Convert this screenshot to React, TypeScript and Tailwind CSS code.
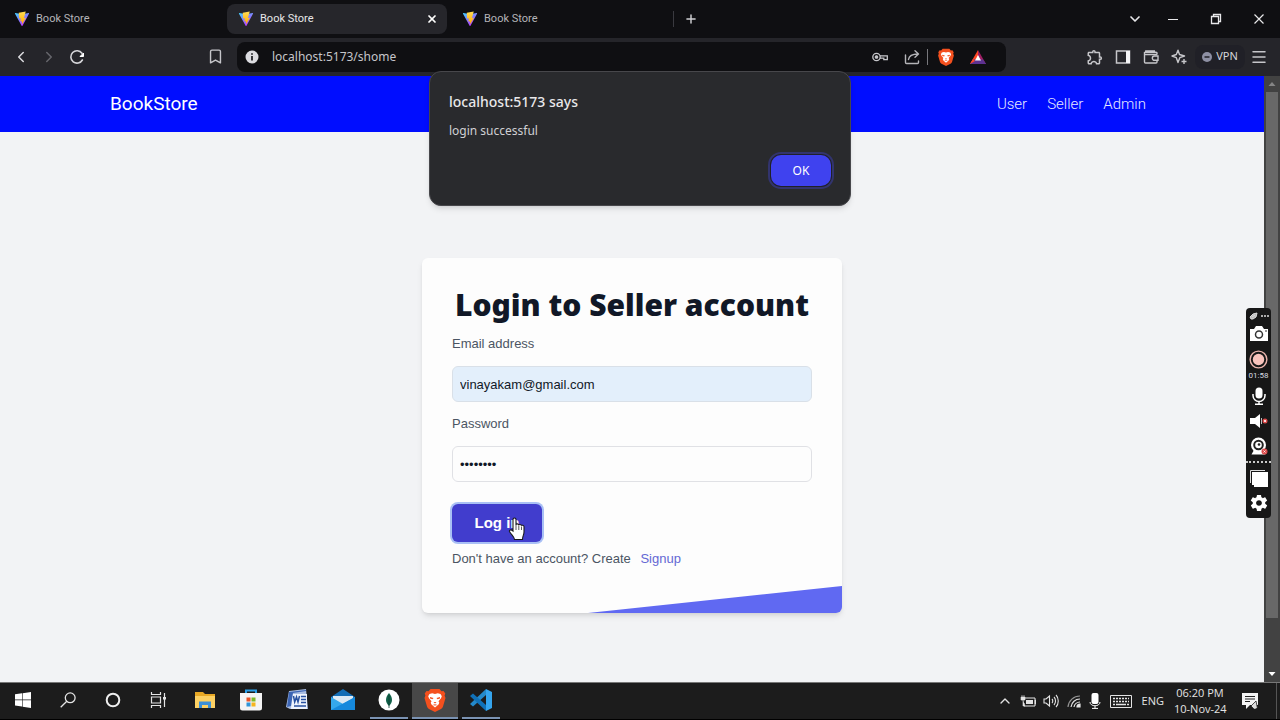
import type { ReactNode } from 'react';
import { ChevronLeft, ChevronRight, ChevronDown, ChevronUp, Plus, X, Menu, Bookmark } from 'lucide-react';
import { MdOutlineExtension } from 'react-icons/md';
import { IoMdSettings } from 'react-icons/io';

function ViteLogo() {
  return (
    <svg viewBox="0 0 32 32" className="size-4 shrink-0" aria-hidden="true">
      <defs>
        <linearGradient id="shell" x1="0" y1="0" x2="0.6" y2="1">
          <stop offset="0" stopColor="#41d1ff" />
          <stop offset="1" stopColor="#bd34fe" />
        </linearGradient>
        <linearGradient id="bolt" x1="0" y1="0" x2="0" y2="1">
          <stop offset="0" stopColor="#ffdd55" />
          <stop offset="1" stopColor="#ffa800" />
        </linearGradient>
      </defs>
      <path d="M30 5.500 17 29.500c-.4.700-1.400.700-1.800 0L2 5.500c-.4-.8.200-1.600 1-1.500L16 6.300 29 4c.9-.1 1.500.700 1 1.500Z" fill="url(#shell)" />
      <path d="m23.500 1-14 2.500.7 11.500 3.300-.3-.5 6.500 3-.8v6l8-13-4.100.8Z" fill="url(#bolt)" />
    </svg>
  );
}

function Tab({ active = false }: { active?: boolean }) {
  return (
    <div className={active ? 'flex h-[30px] w-[220px] items-center rounded-lg bg-[#26262b] pr-[9px] pl-[11px]' : 'flex h-[30px] w-[220px] items-center pr-2 pl-[11px]'}>
      <button type="button" className="flex flex-1 items-center gap-1.5 text-left font-[Roboto,sans-serif]">
        <ViteLogo />
        <span className={active ? 'text-[11px] text-[#e6e6e8]' : 'text-[11px] text-[#b4b4b8]'}>Book Store</span>
      </button>
      {active && (
        <button type="button" aria-label="Close tab">
          <X className="size-3 text-white" strokeWidth={3.5} />
        </button>
      )}
    </div>
  );
}

function BraveIcon({ className }: { className: string }) {
  return (
    <svg viewBox="0 0 24 24" className={className} aria-hidden="true">
      <path d="M7.500 1h9l2 2.300 2-.3 1.800 2.500-.7 2 .9 2.500-2.500 8.500a5 5 0 0 1-2 2.500L12 24l-6-3a5 5 0 0 1-2-2.500L1.500 10l.9-2.500-.7-2L3.500 3l2 .3Z" fill="#f4501e" />
      <path d="m12 6 2.800-.8 2.700.8 1.300 2.200-.8 2-2.500 3 .8 1.500-.8 1.800-3.500 3-3.500-3-.8-1.800.8-1.500-2.500-3-.8-2L6.500 6l2.700-.8Z" fill="#fff" />
      <path d="m7 9 3.500 1-1 1.300L7 10.500Zm10 0-3.500 1 1 1.300 2.500-.8ZM10.500 14h3L12 15.500ZM9.500 17l2.500-.8 2.500.8-2.500.4Z" fill="#f4501e" />
    </svg>
  );
}

function ToolButton({ label, children }: { label: string; children: ReactNode }) {
  return (
    <button type="button" aria-label={label} className="flex h-7 w-7 shrink-0 items-center justify-center text-[#c6c6ca]">
      {children}
    </button>
  );
}

function TabStrip() {
  return (
    <header className="flex h-[38px] shrink-0 items-center justify-between bg-[#0f0f12]">
      <nav aria-label="Tabs" className="flex items-center gap-1 pl-[3px]">
        <Tab />
        <Tab active />
        <Tab />
        <span className="-ml-0.5 h-4 w-px bg-[#3a3a40]" />
        <button type="button" aria-label="New tab" className="ml-1.5">
          <Plus className="size-[14px] text-[#d0d0d4]" strokeWidth={2.5} />
        </button>
      </nav>
      <div className="flex items-center text-[#e8e8ea]">
        <button type="button" aria-label="Search tabs" className="flex w-8 justify-center"><ChevronDown className="size-4" strokeWidth={2.5} /></button>
        <button type="button" aria-label="Minimize" className="flex w-[43px] justify-center">
          <svg viewBox="0 0 12 12" className="size-3" aria-hidden="true"><path d="M1 6.500h10" stroke="currentColor" /></svg>
        </button>
        <button type="button" aria-label="Restore" className="flex w-[43px] justify-center">
          <svg viewBox="0 0 12 12" className="size-3" fill="none" stroke="currentColor" aria-hidden="true">
            <path d="M1.500 3.500h7v7h-7zM3.500 3.500v-2h7v7h-2" strokeWidth="1.300" />
          </svg>
        </button>
        <button type="button" aria-label="Close window" className="flex w-[43px] justify-center">
          <svg viewBox="0 0 12 12" className="size-3" aria-hidden="true"><path d="m1.500 1.500 9 9m0-9-9 9" stroke="currentColor" strokeWidth="1.200" /></svg>
        </button>
      </div>
    </header>
  );
}

function Toolbar() {
  return (
    <div className="flex h-[38px] shrink-0 items-center bg-[#25252a] pb-px">
      <div className="flex w-[237px] shrink-0 items-center pr-2 pl-[7px]">
        <ToolButton label="Back"><ChevronLeft className="size-[18px] text-[#dcdce0]" /></ToolButton>
        <ToolButton label="Forward"><ChevronRight className="size-[18px] text-[#66666c]" /></ToolButton>
        <ToolButton label="Reload">
          <svg viewBox="0 0 16 16" className="size-4" fill="none" aria-hidden="true">
            <path d="M13.400 11A6.200 6.200 0 1 1 13 4.200" stroke="#d6d6da" strokeWidth="1.600" strokeLinecap="round" />
            <path d="M14.500 4v3.500h-3.500Z" fill="#fff" stroke="#fff" strokeLinejoin="round" />
          </svg>
        </ToolButton>
        <span className="flex-1" />
        <ToolButton label="Bookmark this page"><Bookmark className="size-[17px]" strokeWidth={2} /></ToolButton>
      </div>
      <div className="flex h-[30px] flex-1 items-center rounded-lg bg-[#0f0f12] pl-2">
        <svg viewBox="0 0 14 14" className="size-[14px] shrink-0" aria-hidden="true">
          <circle cx="7" cy="7" r="6.500" fill="#dcdce0" />
          <path d="M7 6v4.500M7 3.200v1.600" stroke="#18181b" strokeWidth="1.700" />
        </svg>
        <input aria-label="Address" readOnly value="localhost:5173/shome" className="ml-[13px] min-w-0 flex-1 bg-transparent text-[12px] text-[#c6c6ca] outline-none" />
        <ToolButton label="Passwords">
          <svg viewBox="0 0 16 16" className="size-4" fill="none" stroke="currentColor" strokeWidth="1.300" aria-hidden="true">
            <circle cx="4.500" cy="8" r="3.700" /><circle cx="4.500" cy="8" r="1.200" fill="currentColor" />
            <path d="M8 6.800h7.300v3.900h-3.500V9.200H8" />
          </svg>
        </ToolButton>
        <button type="button" aria-label="Share" className="ml-1 flex w-7 justify-center text-[#b4b4b8]">
          <svg viewBox="0 0 16 16" className="size-4" fill="none" stroke="currentColor" strokeWidth="1.400" strokeLinecap="round" strokeLinejoin="round" aria-hidden="true">
            <path d="M1.500 6v7.500a1 1 0 0 0 1 1h11a1 1 0 0 0 1-1V12M4.500 10.500C5 7 7.500 5 14 5M11 1.800 14.500 5 11 8.200" />
          </svg>
        </button>
        <span className="ml-px h-4 w-px bg-[#77777c]" />
        <button type="button" aria-label="Shields" className="ml-2 flex w-5 justify-center"><BraveIcon className="size-[18px]" /></button>
        <button type="button" aria-label="Rewards" className="mr-[18px] ml-3 flex w-5 justify-center">
          <svg viewBox="0 0 18 16" className="h-4 w-[18px]" aria-hidden="true">
            <path d="M9 1 1 15h8Z" fill="#ff4724" /><path d="m9 1 8 14H9Z" fill="#9e1f63" /><path d="M1 15h16l-3-4.500H4Z" fill="#5c3190" />
            <path d="m4 10-3 5 5-3Z" fill="#ff4724" /><path d="m9 6 3 5.500H6Z" fill="#fff" />
          </svg>
        </button>
      </div>
      <div className="flex w-[274px] shrink-0 items-center justify-end pr-[7px]">
        <ToolButton label="Extensions"><MdOutlineExtension className="size-[18px]" /></ToolButton>
        <ToolButton label="Side panel">
          <svg viewBox="0 0 16 14" className="h-3.5 w-4" aria-hidden="true"><path d="M1.500 1h13v12h-13z" fill="none" stroke="currentColor" strokeWidth="1.500" /><path d="M11 1h4v12h-4z" fill="#f4f4f6" /></svg>
        </ToolButton>
        <ToolButton label="Wallet">
          <svg viewBox="0 0 16 16" className="size-4" fill="none" stroke="currentColor" strokeWidth="1.400" aria-hidden="true">
            <path d="M14 5.500V4.300a1 1 0 0 0-1-1H2.700a1 1 0 0 1 0-1.300H12M1.500 3v10a1 1 0 0 0 1 1H13a1 1 0 0 0 1-1v-1M1.500 5.500h12.700" />
            <path d="M15 7h-3.500a2 2 0 0 0 0 4.300H15Z" />
          </svg>
        </ToolButton>
        <ToolButton label="Assistant">
          <svg viewBox="0 0 16 16" className="size-4" fill="none" stroke="currentColor" strokeWidth="1.400" strokeLinejoin="round" aria-hidden="true">
            <path d="M7 1.200 8.500 5.500 13.500 7 8.800 8.700 7 13.500 5.300 8.700 1 7l4.300-1.500Z" /><path d="M13 10v5M10.500 12.500h5" />
          </svg>
        </ToolButton>
        <button type="button" className="ml-0.5 flex h-6 w-[50px] items-center justify-center gap-1 rounded-lg bg-[#202027] text-[11px] text-[#d6d6da]">
          <svg viewBox="0 0 10 10" className="size-2.5" aria-hidden="true"><circle cx="5" cy="5" r="5" fill="#8e90a4" /><path d="M2.500 5h5" stroke="#202027" strokeWidth="1.500" /></svg>
          VPN
        </button>
        <ToolButton label="Menu"><Menu className="size-[18px]" strokeWidth={2} /></ToolButton>
      </div>
    </div>
  );
}

function AlertDialog() {
  return (
    <div role="alertdialog" aria-labelledby="alert-title" className="absolute top-[71px] left-1/2 z-20 flex w-[422px] -translate-x-1/2 flex-col rounded-xl border border-[#47474b] bg-[#292a2d] px-[19px] pt-5 pb-[19px] shadow-md">
      <h2 id="alert-title" className="text-[14px] leading-5 font-medium text-[#e8e8ea]">localhost:5173 says</h2>
      <p className="mt-[9px] text-[12px] leading-5 text-[#d0d0d4]">login successful</p>
      <button type="button" className="mt-3.5 h-[31px] w-[60px] self-end rounded-[10px] bg-[#3f42ef] text-[12px] text-white ring-2 ring-[#32346e] ring-offset-1 ring-offset-[#202128]">OK</button>
    </div>
  );
}

function NavBar() {
  return (
    <div className="flex h-14 shrink-0 items-center justify-between bg-[#000dff] pr-[118px] pl-[110px] font-[Roboto,sans-serif]">
      <a href="#home" className="text-[19px] text-white">BookStore</a>
      <nav className="flex gap-5 text-[15px] font-light text-[#e6e8ff]">
        <a href="#user">User</a>
        <a href="#seller">Seller</a>
        <a href="#admin">Admin</a>
      </nav>
    </div>
  );
}

function LoginCard() {
  return (
    <form className="relative mx-auto mt-[126px] flex w-[420px] flex-col overflow-hidden rounded-md bg-[#fdfdfd] px-[30px] pt-[30px] pb-11 text-[13px] leading-5 text-[#4b5563] shadow-md" onSubmit={(e) => e.preventDefault()}>
      <h1 className="text-center font-['Noto_Sans',sans-serif] text-[30px] leading-[34px] font-black whitespace-nowrap text-[#111827]">Login to Seller account</h1>
      <label htmlFor="email" className="mt-3">Email address</label>
      <input id="email" type="email" defaultValue="vinayakam@gmail.com" className="mt-3 h-9 rounded-md border border-[#d9e0e8] bg-[#e3effb] px-[7px] text-[#111827]" />
      <label htmlFor="password" className="mt-3">Password</label>
      <input id="password" type="password" defaultValue="password" className="mt-3 h-9 rounded-md border border-[#e0e1e5] bg-[#fdfdfd] px-[7px] text-[#111827]" />
      <button type="submit" className="mt-[22px] h-[38px] w-[90px] rounded-md bg-[#413dcd] text-[15px] font-bold text-white ring-2 ring-[#a9c0f5]">Log in</button>
      <p className="mt-[7px]">Don't have an account? Create <a href="#signup" className="ml-1.5 text-[#6468d4]">Signup</a></p>
      <svg viewBox="0 0 254 27" className="absolute right-0 bottom-0 h-[27px] w-[254px]" aria-hidden="true">
        <path d="M0 27 254 0v27Z" fill="#6069f2" />
      </svg>
    </form>
  );
}

function Scrollbar() {
  return (
    <div className="flex w-4 shrink-0 flex-col items-center bg-[#424242]">
      <svg viewBox="0 0 16 16" className="size-4" aria-hidden="true"><path d="m4.500 10 3.500-4 3.500 4Z" fill="#858585" /></svg>
      <div className="w-3 flex-1 bg-[#686868]" />
      <div className="h-12" />
      <svg viewBox="0 0 16 16" className="size-4" aria-hidden="true"><path d="m4.500 6 3.500 4 3.500-4Z" fill="#fff" /></svg>
    </div>
  );
}

function RecorderPanel() {
  return (
    <aside aria-label="Recorder" className="absolute top-[308px] right-[9px] z-20 flex h-[210px] w-[25px] flex-col items-center rounded bg-[#171717] pt-1 text-white">
      <svg viewBox="0 0 20 8" className="h-2 w-5" aria-hidden="true">
        <path d="M2 7 1 5l3-3 4-1-1 4-3 2ZM3 5l3-2" fill="#bbb" stroke="#ddd" /><path d="M12 4h2m1 0h2m1 0h2" stroke="#ddd" strokeWidth="1.500" />
      </svg>
      <button type="button" aria-label="Take snapshot" className="mt-1.5">
        <svg viewBox="0 0 18 15" className="h-[15px] w-[18px]" aria-hidden="true">
          <path d="M0 3h4l2-3h6l2 3h4v12H0Z" fill="#fff" /><circle cx="9" cy="8.500" r="3.500" fill="none" stroke="#333" strokeWidth="1.500" /><path d="M15 5h2" stroke="#333" />
        </svg>
      </button>
      <button type="button" aria-label="Record" className="mt-[9px]">
        <svg viewBox="0 0 20 20" className="size-[19px]" aria-hidden="true">
          <circle cx="10" cy="10" r="8.800" fill="none" stroke="#e9b3ac" strokeWidth="1.500" /><circle cx="10" cy="10" r="6" fill="#f8c3bc" />
        </svg>
      </button>
      <span className="mt-0.5 font-[Roboto,sans-serif] text-[8px] leading-2.5 text-[#d8dde2]">01:58</span>
      <button type="button" aria-label="Microphone" className="mt-1.5">
        <svg viewBox="0 0 16 18" className="h-[18px] w-4" fill="none" stroke="#fff" strokeWidth="1.500" aria-hidden="true">
          <rect x="4.500" y="0.500" width="7" height="11" rx="3.500" fill="#fff" stroke="none" /><path d="M2 7v1.500a6 6 0 0 0 12 0V7M8 14.500V17M4 17.200h8" />
        </svg>
      </button>
      <button type="button" aria-label="Speaker" className="mt-[9px]">
        <svg viewBox="0 0 18 14" className="h-3.5 w-[18px]" aria-hidden="true">
          <path d="M0 4h5l5-4v14l-5-4H0Z" fill="#fff" /><path d="M11.500 4v6" stroke="#bbb" /><circle cx="15" cy="7" r="2.500" fill="#dc4b4b" /><path d="m14 6 2 2m0-2-2 2" stroke="#fff" strokeWidth=".8" />
        </svg>
      </button>
      <button type="button" aria-label="Webcam" className="mt-[9px]">
        <svg viewBox="0 0 18 18" className="size-[18px]" aria-hidden="true">
          <path d="M4 13 1.500 17.500h14L13 13Z" fill="#fff" /><circle cx="8.500" cy="8" r="7.500" fill="#fff" /><circle cx="8.500" cy="8" r="4.300" fill="none" stroke="#222" strokeWidth="2" /><circle cx="9" cy="7.500" r="1.300" fill="#222" />
          <circle cx="14.500" cy="14.500" r="3" fill="#dc4b4b" /><path d="m13.500 13.500 2 2m0-2-2 2" stroke="#fff" strokeWidth=".8" />
        </svg>
      </button>
      <span className="mt-1.5 w-full border-t-2 border-dotted border-[#c8c8c8]" />
      <button type="button" aria-label="Windows" className="mt-[7px]">
        <svg viewBox="0 0 18 17" className="h-[17px] w-[18px]" aria-hidden="true"><path d="M.5 13V.5H15" fill="none" stroke="#ddd" /><path d="M2 2h16v15H4v-2H2Z" fill="#fff" /></svg>
      </button>
      <button type="button" aria-label="Recorder settings" className="mt-1.5"><IoMdSettings className="size-5" /></button>
    </aside>
  );
}

function TaskItem({ label, active = false, running = false, wide = true, children }: { label: string; active?: boolean; running?: boolean; wide?: boolean; children: ReactNode }) {
  return (
    <button type="button" aria-label={label} className={`flex flex-col items-center ${wide ? 'w-[46px]' : 'w-[45px]'} ${active ? 'bg-[#484848]' : ''}`}>
      <span className="flex flex-1 items-center">{children}</span>
      <span className={`h-0.5 ${active ? 'w-full bg-[#7b93b3]' : running ? 'w-[38px] bg-[#7b93b3]' : 'w-0'}`} />
    </button>
  );
}

function Taskbar() {
  return (
    <footer className="flex h-[38px] shrink-0 justify-between border-t border-b border-t-[#777] border-b-black bg-[#1c1c1c] text-[#e4e4e4]">
      <div className="flex">
        <TaskItem label="Start" wide={false}>
          <svg viewBox="0 0 16 16" className="size-4" fill="#fff" aria-hidden="true"><path d="M0 2.300 7 1.300v6.300H0zM7.600 1.200 16 0v7.600H7.600zM0 8.300h7v6.300l-7-1zM7.600 8.300H16V16l-8.400-1.200z" /></svg>
        </TaskItem>
        <TaskItem label="Search" wide={false}>
          <svg viewBox="0 0 16 16" className="size-4" fill="none" stroke="currentColor" strokeWidth="1.300" aria-hidden="true"><circle cx="10.200" cy="5.800" r="4.900" /><path d="M6.800 9.200.7 15.300" /></svg>
        </TaskItem>
        <TaskItem label="Cortana" wide={false}>
          <svg viewBox="0 0 16 16" className="size-4" fill="none" aria-hidden="true"><circle cx="8" cy="8" r="6.300" stroke="#eee" strokeWidth="2" /></svg>
        </TaskItem>
        <TaskItem label="Task view" wide={false}>
          <svg viewBox="0 0 16 16" className="size-4" fill="none" stroke="currentColor" strokeWidth="1.200" aria-hidden="true"><path d="M1.500 0v2.500h9V0M1.500 5h9v6h-9zM1.500 16v-2.500h9V16M14.500 1v14" /><path d="M13 5h3v2.500h-3z" fill="currentColor" stroke="none" /></svg>
        </TaskItem>
        <div className="ml-0.5 flex">
          <TaskItem label="File Explorer">
            <svg viewBox="0 0 20 18" className="h-[18px] w-5" aria-hidden="true"><path d="M0 1h8l2 2h10v14H0Z" fill="#e8a825" /><path d="M0 5h20v12H0Z" fill="#fcd063" /><path d="M4 17V10.500h12V17h-3v-3H7v3Z" fill="#3c8fd6" /></svg>
          </TaskItem>
          <TaskItem label="Microsoft Store">
            <svg viewBox="0 0 22 22" className="size-[22px]" aria-hidden="true"><path d="M6 5V1.500h10V5" fill="none" stroke="#2a9fe8" strokeWidth="2" /><path d="M0 4h22v15a2.500 2.500 0 0 1-2.500 2.500h-17A2.500 2.500 0 0 1 0 19Z" fill="#f4f4f4" /><path d="M6.500 8.500h4v4h-4z" fill="#e8532a" /><path d="M11.500 8.500h4v4h-4z" fill="#7fba2a" /><path d="M6.500 13.500h4v4h-4z" fill="#2f95d8" /><path d="M11.500 13.500h4v4h-4z" fill="#f6b51e" /></svg>
          </TaskItem>
          <TaskItem label="Word">
            <svg viewBox="0 0 22 22" className="size-[22px]" aria-hidden="true"><path d="M3 2 20 0l2 20H4L0 18Z" fill="#a9bde2" /><path d="M6 5h15v15H5Z" fill="#eef3fc" /><path d="M3 3 1 18l4-1L7 4l13-2V1Z" fill="#3c65b4" /><path d="m7.500 7 1.200 6L10.500 8l1.500 5 1.500-6M15 7.500h5m-5 3h5m-5 3h5M8 17h12" stroke="#27509f" strokeWidth="1.500" fill="none" /></svg>
          </TaskItem>
          <TaskItem label="Mail">
            <svg viewBox="0 0 24 22" className="h-[22px] w-6" aria-hidden="true"><path d="M0 8 12 0l12 8v13H0Z" fill="#136db5" /><path d="M2 7h20v10H2Z" fill="#dce9f3" /><path d="m0 8 12 7 12-7v13H0Z" fill="#35a8ec" /><path d="m0 21 24-13v13Z" fill="#1689dc" /></svg>
          </TaskItem>
          <TaskItem label="MongoDB Compass" running>
            <svg viewBox="0 0 22 22" className="size-[22px]" aria-hidden="true"><circle cx="11" cy="11" r="10.500" fill="#fff" /><path d="M11 4c4 5 4 9 0 13-4-4-4-8 0-13Z" fill="#116149" /><path d="M11 6v13" stroke="#0a3d31" strokeWidth=".8" /></svg>
          </TaskItem>
          <TaskItem label="Brave" active><BraveIcon className="size-6" /></TaskItem>
          <TaskItem label="Visual Studio Code" running>
            <svg viewBox="0 0 24 24" className="size-6" aria-hidden="true"><path d="M17 1v6L4 18.500 1 16Z" fill="#2489ca" /><path d="M17 23v-6L4 5.500 1 8Z" fill="#1071b8" /><path d="m17 1 6 3v16l-6 3Z" fill="#35a5ee" /></svg>
          </TaskItem>
        </div>
      </div>
      <div className="flex items-center font-['Open_Sans','Noto_Sans',sans-serif]">
        <button type="button" aria-label="Hidden icons" className="flex w-[22px] justify-center"><ChevronUp className="size-4" strokeWidth={2} /></button>
        <svg viewBox="0 0 16 12" className="mx-1 h-3 w-4" aria-label="Battery"><path d="M5 3h10v8H4V8" fill="none" stroke="currentColor" /><path d="M6 5h7v4H6z" fill="currentColor" /><path d="M15 5h1v4h-1zM1 2h4v3H1zM2 0v2M4 0v2M3 5v6h2" fill="currentColor" stroke="currentColor" strokeWidth=".6" /></svg>
        <svg viewBox="0 0 16 14" className="mx-[3px] h-3.5 w-4" fill="none" stroke="currentColor" strokeWidth="1.100" aria-label="Volume"><path d="M1 5h2l3.500-3v10L3 9H1ZM9 5c1 1 1 3 0 4M11 3c2 2 2 6 0 8M13 1c3 3 3 9 0 12" /></svg>
        <svg viewBox="0 0 14 14" className="mx-[5px] size-3.5" fill="none" stroke="currentColor" strokeWidth="1.200" aria-label="Network"><path d="M1 13A12 12 0 0 1 13 2" opacity=".6" /><path d="M4 13a9 9 0 0 1 9-8M7 13a6 6 0 0 1 6-5" /><path d="M10 13a3 3 0 0 1 3-3v3Z" fill="currentColor" /></svg>
        <svg viewBox="0 0 12 16" className="mx-[3px] h-4 w-3" aria-label="Microphone"><rect x="2.500" y="0" width="7" height="11" rx="2" fill="#fff" /><path d="M1 9c0 5 10 5 10 0M6 13v2.500M3 15.400h6" fill="none" stroke="#fff" /></svg>
        <svg viewBox="0 0 22 13" className="ml-1.5 h-[13px] w-[22px]" fill="none" stroke="currentColor" aria-label="Keyboard"><path d="M.5.5h21v12H.5z" /><path d="M3 3.500h16M3 6.500h16" strokeDasharray="2 1" strokeWidth="1.500" /><path d="M3 9.500h2m1 0h10m1 0h2" strokeWidth="1.500" /></svg>
        <span className="mx-2.5 text-[11px]">ENG</span>
        <div className="w-[52px] text-center text-[11px] leading-4 whitespace-nowrap">
          <div>06:20 PM</div>
          <div>10-Nov-24</div>
        </div>
        <button type="button" aria-label="Notifications" className="mr-[18px] ml-4">
          <svg viewBox="0 0 16 16" className="size-4" aria-hidden="true"><path d="M0 0h16v12H8l-4 4v-4H0Z" fill="#f4f4f4" /><path d="M3 3.500h10M3 6h10M3 8.500h5" stroke="#222" /><path d="m9 13 5-5 1 5a2 2 0 0 1-4 2Z" fill="#ddd" stroke="#222" strokeWidth=".8" /></svg>
        </button>
        <span className="mr-[3px] h-full w-px bg-[#555]" />
      </div>
    </footer>
  );
}

export default function App() {
  return (
    <div className="relative flex h-screen flex-col overflow-hidden bg-[#f2f3f5] font-['Noto_Sans','Open_Sans',sans-serif]">
      <TabStrip />
      <Toolbar />
      <AlertDialog />
      <div className="flex min-h-0 flex-1">
        <main className="min-w-0 flex-1 overflow-hidden font-['Liberation_Sans',Arial,sans-serif]">
          <NavBar />
          <LoginCard />
        </main>
        <Scrollbar />
      </div>
      <RecorderPanel />
      <Taskbar />
      <svg viewBox="0 0 18 24" className="pointer-events-none absolute top-[517px] left-[508px] z-30 h-6 w-[18px]" aria-hidden="true">
        <path d="M5 14V2.500a1.500 1.500 0 0 1 3 0V8c0-1.500 2.600-1.500 2.800.3 0-1.200 2.500-1.200 2.700.5 0-1 2.500-.8 2.500 1V15c0 3-1.500 4-1.500 7.500h-8C6.500 20 3 17.500 1.500 14.500 1 13 3 12 5 14Z" fill="#fff" stroke="#1a1a1a" strokeWidth="1.100" />
        <path d="M8 8v5m2.800-4.500V13m2.700-3.500V13" stroke="#333" strokeWidth=".8" />
      </svg>
    </div>
  );
}
